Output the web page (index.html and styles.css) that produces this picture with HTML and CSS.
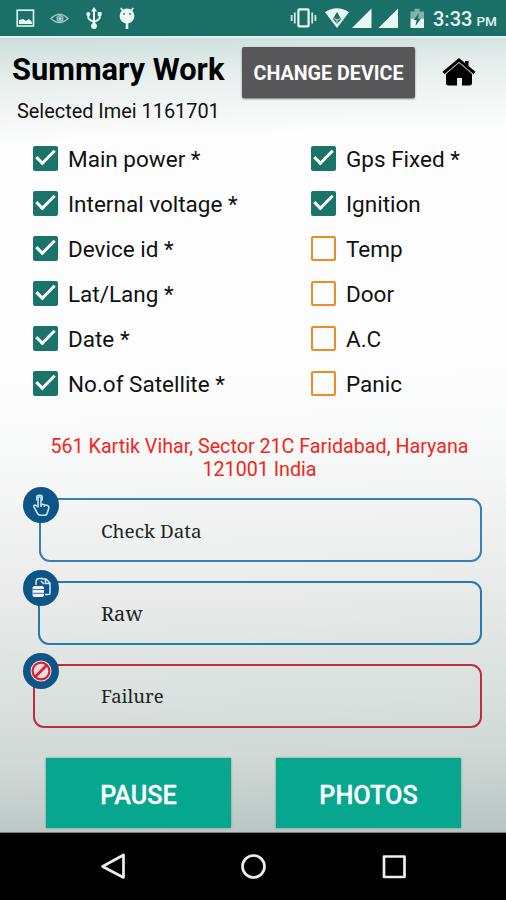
FILE: index.html
```html
<!DOCTYPE html>
<html lang="en">
<head>
<meta charset="utf-8">
<title>Summary Work</title>
<link rel="stylesheet" href="styles.css">
</head>
<body>
<div class="phone">
  <header class="status">
    <svg class="status-icons" width="506" height="36" viewBox="0 0 506 36" aria-hidden="true">
      <g fill="none" stroke="#d5f0eb" stroke-width="1.7"><rect x="17.2" y="10.2" width="16.3" height="15.8"/></g>
      <path d="M19 24v-4l4-1 3 2 3-2 3 3v2z" fill="#eefaf7"/>
      <g fill="none" stroke="#9dc3bd" stroke-width="1.5"><path d="M51 18.5q8.500-8.500 17 0q-8.500 8-17 0z"/><circle cx="60" cy="18.500" r="2.800"/></g><circle cx="60" cy="18.500" r="1.500" fill="#c4dcd8"/>
      <g fill="none" stroke="#edfaf7" stroke-width="2"><path d="M94 10v15M88.300 14v3.500q0 2 5.700 4.500M99.700 14v3.500q0 2-5.700 4.500"/></g>
      <g fill="#edfaf7"><path d="M94 7l3 4.500h-6z"/><circle cx="94" cy="26" r="2.900"/><circle cx="88.300" cy="14" r="2"/><path d="M97.800 12h3.800v3.800h-3.800z"/>
      <circle cx="127" cy="16" r="7.400"/><path d="M125.700 22h2.600v7h-2.600z"/></g>
      <path d="M120.800 8l3 4M133.200 8l-3 4" stroke="#edfaf7" stroke-width="1.700"/>
      <circle cx="124" cy="14" r=".9" fill="#1a7067"/><circle cx="130" cy="14" r=".9" fill="#1a7067"/>
      <rect x="298.400" y="9.400" width="10.200" height="17" rx="1" fill="none" stroke="#e8f7f4" stroke-width="2.200"/>
      <path d="M294.800 12.500v11M291.600 15v6M312.200 12.500v11M315.400 15v6" stroke="#cfe8e3" stroke-width="1.800"/>
      <path d="M325 12.300q12-8.300 24 0L337 28z" fill="#e8f7f4"/><path d="M337 12l4.200 7-4.200 5-4.200-5z" fill="#1a7067"/><path d="M333.800 18.500l3.200 1.500 3.200-1.500M337 20v3" stroke="#d5ebe7" fill="none"/>
      <path d="M352 28l19.500-19.500V28zM378.500 28L398 8.500V28z" fill="#e8f7f4"/>
      <path d="M410.500 11.500h4v-2.700h5v2.700h4.500v7h-13.500z" fill="#82b1aa"/><path d="M410.500 18.500H424V28h-13.500z" fill="#e8f7f4"/><path d="M419 13l-5.500 7h3l-1 6 5.500-7.500h-3z" fill="#1a7067"/>
    </svg>
    <div class="clock">3:33 <span>PM</span></div>
  </header>
  <main class="screen">
    <section class="heading">
      <h1>Summary Work</h1>
      <button class="change">CHANGE DEVICE</button>
      <svg class="home" width="34" height="30" viewBox="0 0 34 30" aria-label="Home">
        <path d="M1.500 16L17 3l15.500 13" fill="none" stroke="#000" stroke-width="3"/>
        <path d="M23 4h3.500v7.500l-3.500-3z"/><path d="M4 17L17 6l13 11v9q0 2.500-3 2.500h-7V21h-5v7.500H7q-3 0-3-2.500z"/>
        <path d="M3 17L17 5.200 31 17" fill="none" stroke="#8b9390" stroke-width=".7"/>
      </svg>
    </section>
    <p class="imei">Selected Imei 1161701</p>
    <section class="checks">
      <div class="row"><i class="box on"></i><span>Main power *</span></div><div class="row"><i class="box on"></i><span>Gps Fixed *</span></div>
      <div class="row"><i class="box on"></i><span>Internal voltage *</span></div><div class="row"><i class="box on"></i><span>Ignition</span></div>
      <div class="row"><i class="box on"></i><span>Device id *</span></div><div class="row"><i class="box"></i><span>Temp</span></div>
      <div class="row"><i class="box on"></i><span>Lat/Lang *</span></div><div class="row"><i class="box"></i><span>Door</span></div>
      <div class="row"><i class="box on"></i><span>Date *</span></div><div class="row"><i class="box"></i><span>A.C</span></div>
      <div class="row"><i class="box on"></i><span>No.of Satellite *</span></div><div class="row"><i class="box"></i><span>Panic</span></div>
    </section>
    <p class="address">561 Kartik Vihar, Sector 21C Faridabad, Haryana<br>121001 India</p>
    <section class="cards">
      <div class="card check"><span>Check Data</span>
        <svg class="badge" width="36" height="36" viewBox="0 0 36 36" aria-hidden="true"><circle cx="18" cy="18" r="18" fill="#0d5587"/><g fill="none" stroke="#c9e2ee" stroke-width="1.600" stroke-linejoin="round"><path d="M13.800 13.500v-3.300q0-2 2-2h1.400q2 0 2 2v3.300"/><path d="M15 20v-9.500q1.500-1.600 3 0V17l6.500 1.500q1.500.5 1.300 2.500l-1.500 5q-.7 2.300-3 2.300H18q-2.500 0-3.500-1.800L11 20q-.5-2 1.500-2z"/><path d="M18 17v3M21.300 18v2"/></g></svg>
      </div>
      <div class="card raw"><span>Raw</span>
        <svg class="badge" width="36" height="36" viewBox="0 0 36 36" aria-hidden="true"><circle cx="18" cy="18" r="18" fill="#0d5587"/><path d="M13 15v-3q0-3.500 3.500-3.500H20M19 9h4l4 4v10q0 1.500-2 1.500h-3M22.500 9v4.500H27M18 11l3 3" fill="none" stroke="#d8eaf2" stroke-width="1.500"/><rect x="9.500" y="16" width="11.500" height="11" rx="2" fill="#eef6fa"/><path d="M9.500 19.500H21M9.500 23.300H21" stroke="#0d5587" stroke-width=".8"/></svg>
      </div>
      <div class="card failure"><span>Failure</span>
        <svg class="badge" width="36" height="36" viewBox="0 0 36 36" aria-hidden="true"><circle cx="18" cy="18" r="18" fill="#0d5587"/><circle cx="18" cy="18" r="10.500" fill="#e9e5ea"/><circle cx="18" cy="18" r="8.400" fill="#e8dfe4" stroke="#d9232e" stroke-width="2.200"/><path d="M12.300 23.700L23.700 12.300" stroke="#d9232e" stroke-width="2.800"/></svg>
      </div>
    </section>
    <section class="actions"><button>PAUSE</button><button>PHOTOS</button></section>
  </main>
  <nav class="nav">
    <svg width="506" height="67" viewBox="0 0 506 67" fill="none" stroke="#eee" stroke-width="2.700" stroke-linejoin="round" aria-hidden="true"><path d="M123.500 22v22.500L102.500 33.500z"/><circle cx="253.500" cy="33.500" r="11"/><rect x="384" y="23.500" width="20.500" height="20.500"/></svg>
  </nav>
</div>
</body>
</html>
```
FILE: styles.css
```css
*, *::after { box-sizing: border-box; }
body { margin: 0; font-family: Roboto, "Liberation Sans", sans-serif; color: #111; }
h1, p { margin: 0; }
button { border: 0; padding: 0; font-family: inherit; color: #fff; }
svg { display: block; }
.phone { width: 506px; height: 900px; display: flex; flex-direction: column; overflow: hidden; }
.status { height: 36px; background: #1a7067; display: grid; }
.status-icons, .clock { grid-area: 1 / 1; }
.clock { display: flex; align-items: baseline; gap: 4px; justify-self: end; width: 73px; padding-top: 6px; font-size: 20px; line-height: 26px; font-weight: 500; color: #e1f3f0; white-space: nowrap; }
.clock span { font-size: 13.500px; }
.screen { height: 797px; border-top: 2px solid #e2efec; background: linear-gradient(178deg, #cbdedb 0, #e5eeec 5%, #fdfdfd 13%, #fdfdfd 42%, #f6f7f7 55%, #e4e8e6 73%, #d1dad7 89%, #b7c5c2 100%); border-bottom: 1px solid #777f7d; }
.heading { height: 60px; display: flex; align-items: flex-start; padding-left: 12px; }
.heading h1 { width: 230px; padding-top: 13px; font-size: 30.800px; line-height: 38px; font-weight: 700; color: #000; white-space: nowrap; }
.change { width: 173px; height: 51px; margin-top: 9px; padding-top: 1px; background: #575759; border-radius: 2px; font-size: 19.700px; font-weight: 700; box-shadow: 0 1px 2px #777; white-space: nowrap; }
.home { margin: 19px 0 0 27px; }
.imei { height: 38px; padding: 2px 0 0 17px; font-size: 19.900px; line-height: 24px; white-space: nowrap; }
.checks { display: grid; grid-template-columns: 278px 1fr; grid-auto-rows: 45px; padding-left: 33px; }
.row { display: flex; align-items: center; gap: 10px; font-size: 22.500px; white-space: nowrap; }
.row span { line-height: 26px; }
.box { width: 25px; height: 25px; border: 2px solid #ed8c25; border-radius: 2px; display: block; flex: none; }
.box.on { background: #1a7469; border-color: #1a7469; }
.box.on::after { content: ""; display: block; width: 19px; height: 10px; margin: 1.600px 0 0 .7px; border-left: 3px solid #fff; border-bottom: 3px solid #fff; transform: rotate(-45deg); }
.address { height: 92px; padding: 29px 0 0 13px; text-align: center; color: #f2261a; font-size: 19.700px; line-height: 23px; white-space: nowrap; }
.cards { height: 250px; }
.card { position: relative; height: 64px; margin: 0 24px 19px 39px; border: 2px solid #397fb0; border-radius: 11px; display: flex; align-items: center; padding-left: 60px; font: 18.900px "Noto Serif", "DejaVu Serif Condensed", "DejaVu Serif", serif; color: #202423; }
.card > span { padding-top: 1px; }
.badge { position: absolute; left: -18px; top: -13px; }
.raw { margin-left: 38px; padding-left: 61px; border-color: #297aac; }
.raw > span { font-size: 20px; }
.raw .badge { left: -17px; }
.failure { margin-left: 33px; padding-left: 66px; border-color: #bd2f3b; }
.failure .badge { left: -12px; }
.failure > span { margin-top: -3px; font-size: 18.500px; }
.actions { display: flex; gap: 45px; padding: 10px 0 0 46px; }
.actions button { width: 185px; height: 70px; padding-top: 4px; background: #06a78e; box-shadow: 0 0 2px #728d87; font-size: 25.200px; font-weight: 500; -webkit-text-stroke: .3px #fff; }
.nav { height: 67px; background: #000; }
```
